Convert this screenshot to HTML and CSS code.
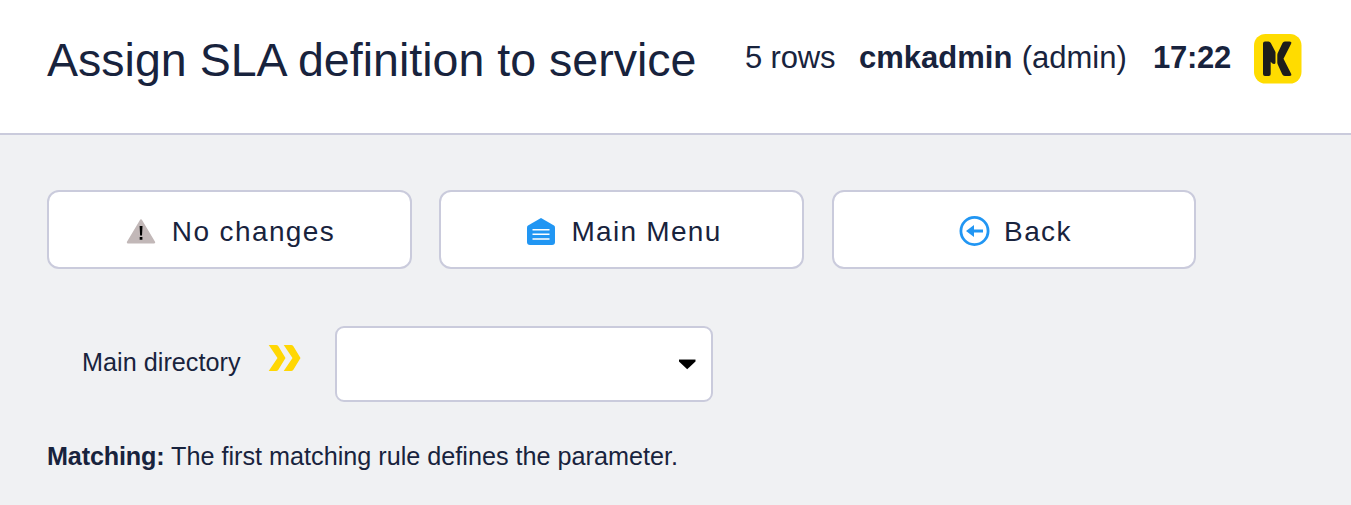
FILE: index.html
```html
<!DOCTYPE html>
<html lang="en">
<head>
<meta charset="utf-8">
<title>Assign SLA definition to service</title>
<link rel="stylesheet" href="styles.css">
</head>
<body>
<header class="header">
  <h1 class="title">Assign SLA definition to service</h1>
  <span class="rows">5 rows</span>
  <span class="user"><b>cmkadmin</b> (admin)</span>
  <b class="time">17:22</b>
  <svg class="logo" viewBox="0 0 48 50"><rect width="47.500" height="49.500" rx="11.500" fill="#ffdc00"/><path d="M11 7.500h3.500q1.500 0 2.300 1.600L21.500 18v10.500q0 1.500-1.500 1.500-1.500 0-3.300-2.300V40q0 2-2 2H11q-2 0-2-2V9.500q0-2 2-2z" fill="#1d1d1b"/><path d="M30.800 7.500h4.500q3 0 1.700 2.500L29.500 24.700l7.500 14.800q1.200 2.500-1.700 2.500h-4.500q-1.800 0-2.600-1.700l-4.200-9.300q-.7-1.300-.7-2.500v-7.500q0-1.300.7-2.500l4.500-9.500q.8-1.500 2.300-1.500z" fill="#1d1d1b"/></svg>
</header>
<nav class="actions">
  <a class="button"><svg class="warn" viewBox="0 0 30 26"><path d="M15 2.500 28 24.300H2z" fill="#c2b8b8" stroke="#c2b8b8" stroke-width="2.400" stroke-linejoin="round"/><path d="M13.600 8h2.900l-.5 9.500h-1.900zM13.700 19h2.700v2.800h-2.700z" fill="#000"/></svg><span>No changes</span></a>
  <a class="button"><svg class="home" viewBox="0 0 28 27"><path d="M14 0 27 7.500q1 .7 1 2V24q0 3-3 3H3q-3 0-3-3V9.500q0-1.300 1-2z" fill="#2196f3"/><path d="M5.500 11.800h17M5.500 16.300h17M5.500 21h17" stroke="#fff" stroke-width="1.500"/></svg><span>Main Menu</span></a>
  <a class="button"><svg class="back-icon" viewBox="0 0 31 30"><circle cx="15.500" cy="15" r="13.600" fill="none" stroke="#2196f3" stroke-width="2.800"/><path d="M7 15l8-6v4.500h9v3h-9V21z" fill="#2196f3"/></svg><span>Back</span></a>
</nav>
<div class="folder">
  <span class="folder-name">Main directory</span>
  <svg class="chevrons" viewBox="0 0 33 27"><path d="M.7 0h7.500q1.200 0 2 1L17.500 13l-7.300 12q-.8 1-2 1H.7L9.500 13zM15.700 0h7.500q1.200 0 2 1L32.500 13l-7.300 12q-.8 1-2 1h-7.500L24.500 13z" fill="#ffd703"/></svg>
  <div class="select"><svg class="caret" viewBox="0 0 18 11"><path d="M1 1h16.500v1.500L9.200 10.300 1 2.500z" fill="#000"/><path d="M1 .5h16.500" stroke="#888"/></svg></div>
</div>
<p class="matching"><b>Matching:</b> The first matching rule defines the parameter.</p>
</body>
</html>
```
FILE: styles.css
```css
* { box-sizing: border-box; }
body {
  margin: 0;
  height: 505px;
  overflow: hidden;
  background: #f0f1f3;
  color: #18233d;
  font-family: "Liberation Sans", Arial, sans-serif;
}
svg { display: block; flex: none; }
.header {
  display: flex;
  align-items: flex-start;
  height: 135px;
  padding-left: 47px;
  background: #fff;
  border-bottom: 2px solid #cacbdc;
  white-space: nowrap;
  font-size: 31px;
  line-height: 36px;
}
.title { width: 698px; margin: 33px 0 0; font-size: 46.550px; line-height: 54px; font-weight: 400; }
.rows { width: 114px; margin-top: 40px; letter-spacing: -0.150px; }
.user { width: 294px; margin-top: 40px; }
.user b { margin-right: 0.700px; }
.time { width: 101px; margin-top: 40px; letter-spacing: -0.250px; }
.logo { width: 48px; height: 50px; margin-top: 34px; }
.actions {
  display: grid;
  grid-template-columns: 365px 365px 364px;
  column-gap: 27.500px;
  padding: 55px 0 0 47px;
}
.button:nth-child(2) { margin: 0 0.500px 0 -0.500px; }
.button {
  display: flex;
  align-items: center;
  justify-content: center;
  height: 79px;
  padding: 2px 0 0 3px;
  background: #fff;
  border: 2px solid #cacbdc;
  border-radius: 12px;
  font-size: 28px;
  line-height: 32px;
  letter-spacing: 1.400px;
}
.button span { padding-top: 2px; }
.warn { width: 30px; height: 26px; margin: 0 16px 0 -1px; }
.home { width: 28px; height: 27px; margin: 1px 16px 0 3px; }
.button:nth-child(2) span { letter-spacing: 1.300px; }
.back-icon { width: 31px; height: 30px; margin-right: 14px; }
.folder { display: flex; align-items: flex-start; padding: 57px 0 0 82px; font-size: 25.200px; line-height: 29px; }
.folder-name { width: 186px; margin-top: 22px; letter-spacing: 0.030px; }
.chevrons { width: 33px; height: 27px; margin: 19px 34px 0 0; }
.select {
  display: flex;
  align-items: center;
  justify-content: flex-end;
  width: 378px;
  height: 76px;
  padding: 1px 15px 0 0;
  background: #fff;
  border: 2px solid #cacbdc;
  border-radius: 9px;
}
.caret { width: 18px; height: 11px; }
.matching { margin: 40px 0 0 47px; font-size: 25.200px; line-height: 29px; }
.matching b { letter-spacing: -0.150px; }
```
